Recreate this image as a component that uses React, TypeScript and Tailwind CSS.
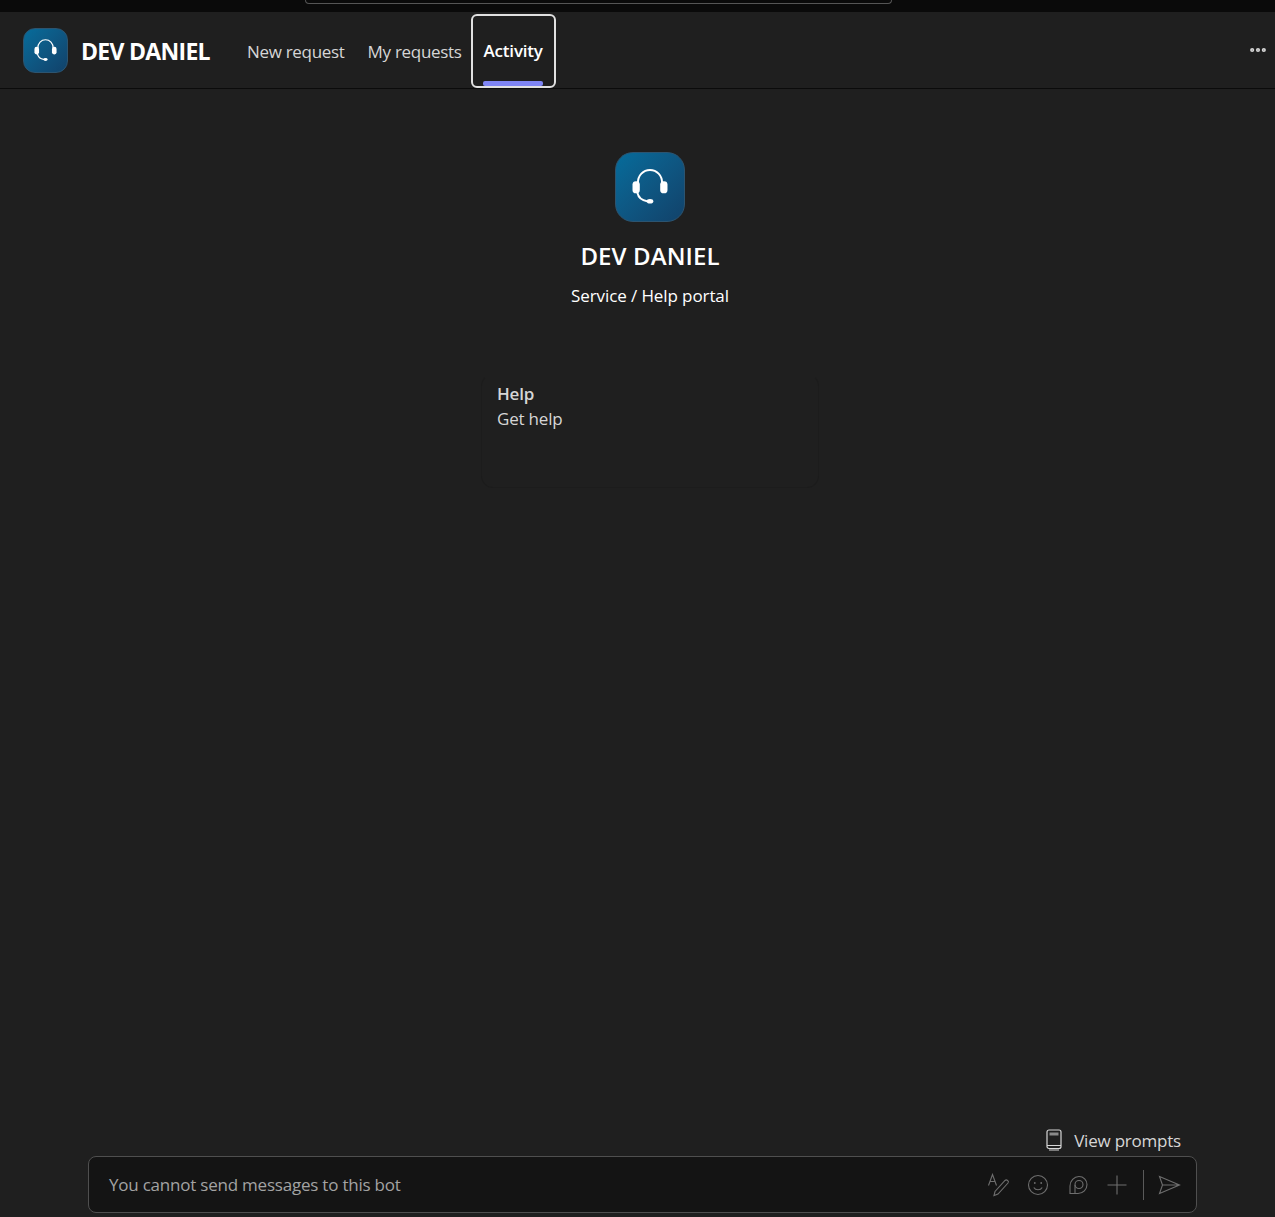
import { MoreHorizontal } from 'lucide-react';

const font = { fontFamily: '"Open Sans", "Noto Sans", sans-serif' };

function HeadsetLogo({ size, radius }: { size: number; radius: string }) {
  return (
    <div
      className={`flex shrink-0 items-center justify-center border border-[#2c5470] bg-gradient-to-br from-[#056c9b] to-[#11426a] ${radius}`}
      style={{ width: size, height: size }}
    >
      <svg viewBox="0 0 70 70" width={size} height={size} fill="none">
        <path d="M22.500 31 C22.500 23 28 17.500 35 17.500 C42 17.500 47.500 23 47.500 31" stroke="#fff" strokeWidth="2" />
        <path d="M22 41 C23 45.500 26 48.800 32 49.600" stroke="#fff" strokeWidth="2" strokeLinecap="round" />
        <rect x="17" y="29" width="7.500" height="12.500" rx="3.500" fill="#fff" />
        <rect x="45.500" y="29" width="7.500" height="12.500" rx="3.500" fill="#fff" />
        <ellipse cx="35" cy="49.700" rx="3.400" ry="2.400" fill="#fff" />
      </svg>
    </div>
  );
}

function ComposeIcons() {
  return (
    <div className="mt-[1px] flex items-center text-[#6e6e6e]">
      <svg width="24" height="24" viewBox="0 0 24 24" fill="none" stroke="currentColor" strokeWidth="1.100" className="mr-[15px]">
        <path d="M1.500 12.500 L5.500 1.500 L9.500 12.500 M3 8.500 H8" />
        <path d="M7 22.500 L8 18.500 L18 7.500 C19.500 6 22.500 8 21 10 L11 21 Z" />
      </svg>
      <svg width="24" height="24" viewBox="0 0 24 24" fill="none" stroke="currentColor" strokeWidth="1.100" className="mr-[16px]">
        <circle cx="12" cy="12" r="9.500" />
        <circle cx="8.800" cy="10" r="0.900" fill="currentColor" stroke="none" />
        <circle cx="15.200" cy="10" r="0.900" fill="currentColor" stroke="none" />
        <path d="M7.800 14.500 C9.500 17.500 14.500 17.500 16.200 14.500" />
      </svg>
      <svg width="24" height="24" viewBox="0 0 24 24" fill="none" stroke="currentColor" strokeWidth="1.100" className="mr-[15px]">
        <path d="M4 20.500 L4 13 C4 8 8 3.500 13 3.500 C17.500 3.500 21 7 21 11.500 C21 16.500 17 20.500 12 20.500 Z" />
        <circle cx="13" cy="11.500" r="4" />
        <path d="M9 12 V20" />
      </svg>
      <svg width="24" height="24" viewBox="0 0 24 24" fill="none" stroke="currentColor" strokeWidth="1.100" className="mr-[14px]">
        <path d="M12 2.500 V21.500 M2.500 12 H21.500" />
      </svg>
      <div className="mr-[13px] mt-[-1px] h-[30px] w-px bg-[#5a5a5a]" />
      <svg width="24" height="24" viewBox="0 0 24 24" fill="none" stroke="currentColor" strokeWidth="1.100">
        <path d="M2.500 3.500 L22.500 12 L2.500 20.500 L5.500 12 Z M5.500 12 H22.500" />
      </svg>
    </div>
  );
}

export default function App() {
  return (
    <div className="flex h-[1217px] flex-col overflow-hidden bg-[#1f1f1f] text-white" style={font}>
      <div className="h-3 shrink-0 bg-[#0a0a0a]">
        <div className="ml-[305px] h-1 w-[587px] rounded-b-md border border-t-0 border-[#555]" />
      </div>

      <header className="flex h-[77px] shrink-0 items-center border-b border-[#0b0b0b] pl-[23px] pr-[7px]">
        <HeadsetLogo size={45} radius="rounded-[12px]" />
        <span className="ml-[13px] pt-[3px] text-[23px] font-bold tracking-[-0.7px]">DEV DANIEL</span>
        <nav className="ml-[37px] flex h-full items-center pt-[3px] text-[17px] tracking-[-0.3px] text-[#d6d6d6]">
          <span>New request</span>
          <span className="ml-[23px]">My requests</span>
          <div className="relative ml-[9px] mt-[-2px] flex h-[74px] w-[85px] items-center justify-center rounded-[6px] border-2 border-[#e0e0e0] font-semibold tracking-[-0.2px] text-white">
            Activity
            <div className="absolute bottom-0 left-[10px] h-[5px] w-[60px] rounded-[2px] bg-[#7f85f5]" />
          </div>
        </nav>
        <MoreHorizontal size={20} strokeWidth={3} className="ml-auto text-[#d6d6d6]" />
      </header>

      <main className="flex flex-1 flex-col">
        <section className="flex flex-col items-center pl-[25px] pt-[63px]">
          <HeadsetLogo size={70} radius="rounded-[18px]" />
          <h1 className="mt-[16px] text-[24px] font-semibold leading-[36px] tracking-[0.1px]">DEV DANIEL</h1>
          <p className="mt-[9px] text-[17px] leading-[26px] tracking-[-0.1px]">Service / Help portal</p>
          <div className="mt-[65px] h-[114px] w-[338px] rounded-[12px] border border-[#1c1c1c] border-t-transparent px-[15px] pt-[6px] text-[17px] leading-[25px] tracking-[-0.2px] text-[#d6d6d6]">
            <div className="font-semibold">Help</div>
            <div>Get help</div>
          </div>
        </section>

        <footer className="mt-auto pb-[4px] pl-[88px] pr-[78px]">
          <div className="flex items-center justify-end pb-[3px] pr-[16px] text-[17px] tracking-[-0.22px] text-[#d6d6d6]">
            <svg width="18" height="22" viewBox="0 0 18 22" fill="none" stroke="#d6d6d6" strokeWidth="1.200" className="mr-[11px]">
              <rect x="2" y="1" width="14" height="18.500" rx="2" />
              <path d="M2 16.500 H16 M4 21 H14" />
              <rect x="4.500" y="3.500" width="9" height="3" fill="#8a8a8a" stroke="none" />
            </svg>
            View prompts
          </div>
          <div className="flex h-[57px] items-center justify-between rounded-[8px] border border-[#4f4f4f] bg-[#141414] pl-[20px] pr-[15px]">
            <span className="text-[17px] tracking-[-0.22px] text-[#a3a3a3]">You cannot send messages to this bot</span>
            <ComposeIcons />
          </div>
        </footer>
      </main>
    </div>
  );
}
